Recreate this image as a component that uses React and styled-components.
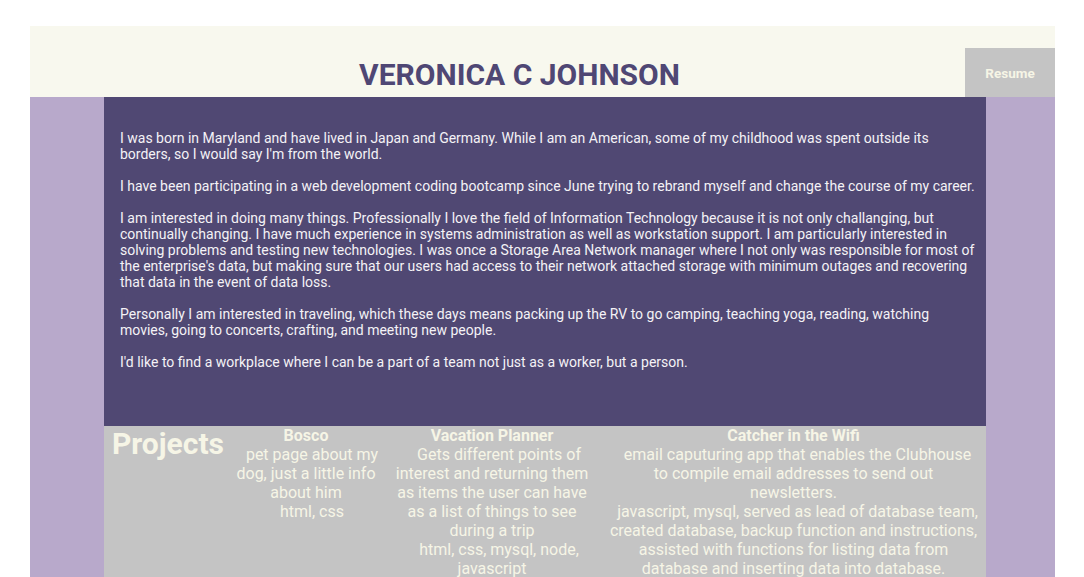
import React from 'react'
import styled, { createGlobalStyle } from 'styled-components'

const GlobalStyle = createGlobalStyle`
  body {
    margin: 0;
    background: #ffffff;
    font-family: Roboto, "Liberation Sans", Arial, sans-serif;
  }
`

const Page = styled.div`
  padding: 26px 29px 0 30px;
`

const Header = styled.header`
  display: flex;
  align-items: flex-end;
  height: 71px;
  background: #f8f8ee;
`

const Name = styled.h1`
  flex: 1;
  margin: 0 0 5px 0;
  padding-left: 44px;
  text-align: center;
  font-size: 30px;
  font-weight: 700;
  color: #4f4774;
`

const ResumeButton = styled.button`
  width: 90px;
  height: 49px;
  border: none;
  background: #c4c4c4;
  color: #f6f5e6;
  font-family: Roboto, "Liberation Sans", Arial, sans-serif;
  font-size: 13.5px;
  font-weight: 700;
  cursor: pointer;
`

const Body = styled.main`
  background: #b8a9cb;
  padding: 0 69px 0 74px;
`

const About = styled.section`
  background: #504873;
  padding: 33px 8px 56px 16px;
  color: #f4f2f6;
  font-size: 14px;
  line-height: 16px;

  p {
    margin: 0 0 16px 0;
  }
  p:last-child {
    margin-bottom: 0;
  }
`

const Projects = styled.section`
  display: flex;
  align-items: flex-start;
  background: #c4c4c4;
  padding: 0 8px 20px 8px;
  color: #f6f5e6;
`

const ProjectsTitle = styled.h2`
  margin: 0;
  font-size: 30px;
  font-weight: 700;
  line-height: 35px;
`

const Project = styled.div`
  width: ${props => props.width}px;
  margin-left: ${props => props.offset}px;
  flex-shrink: 0;
  text-align: center;
  font-size: 16px;
  line-height: 19px;

  h3 {
    margin: 0;
    font-size: 16px;
    font-weight: 700;
  }
  p {
    margin: 0;
    text-indent: ${props => props.indent}px;
  }
`

const projects = [
  {
    name: 'Bosco',
    width: 150,
    offset: 7,
    indent: 12,
    description: 'pet page about my dog, just a little info about him',
    tech: 'html, css',
  },
  {
    name: 'Vacation Planner',
    width: 198,
    offset: 12,
    indent: 14,
    description: 'Gets different points of interest and returning them as items the user can have as a list of things to see during a trip',
    tech: 'html, css, mysql, node, javascript',
  },
  {
    name: 'Catcher in the Wifi',
    width: 369,
    offset: 18,
    indent: 8,
    description: 'email caputuring app that enables the Clubhouse to compile email addresses to send out newsletters.',
    tech: 'javascript, mysql, served as lead of database team, created database, backup function and instructions, assisted with functions for listing data from database and inserting data into database.',
  },
]

export default function App() {
  return (
    <Page>
      <GlobalStyle />
      <Header>
        <Name>VERONICA C JOHNSON</Name>
        <ResumeButton>Resume</ResumeButton>
      </Header>
      <Body>
        <About>
          <p>I was born in Maryland and have lived in Japan and Germany. While I am an American, some of my childhood was spent outside its borders, so I would say I'm from the world.</p>
          <p>I have been participating in a web development coding bootcamp since June trying to rebrand myself and change the course of my career.</p>
          <p>I am interested in doing many things. Professionally I love the field of Information Technology because it is not only challanging, but continually changing. I have much experience in systems administration as well as workstation support. I am particularly interested in solving problems and testing new technologies. I was once a Storage Area Network manager where I not only was responsible for most of the enterprise's data, but making sure that our users had access to their network attached storage with minimum outages and recovering that data in the event of data loss.</p>
          <p>Personally I am interested in traveling, which these days means packing up the RV to go camping, teaching yoga, reading, watching movies, going to concerts, crafting, and meeting new people.</p>
          <p>I'd like to find a workplace where I can be a part of a team not just as a worker, but a person.</p>
        </About>
        <Projects>
          <ProjectsTitle>Projects</ProjectsTitle>
          {projects.map(project => (
            <Project key={project.name} width={project.width} offset={project.offset} indent={project.indent}>
              <h3>{project.name}</h3>
              <p>{project.description}</p>
              <p>{project.tech}</p>
            </Project>
          ))}
        </Projects>
      </Body>
    </Page>
  )
}
